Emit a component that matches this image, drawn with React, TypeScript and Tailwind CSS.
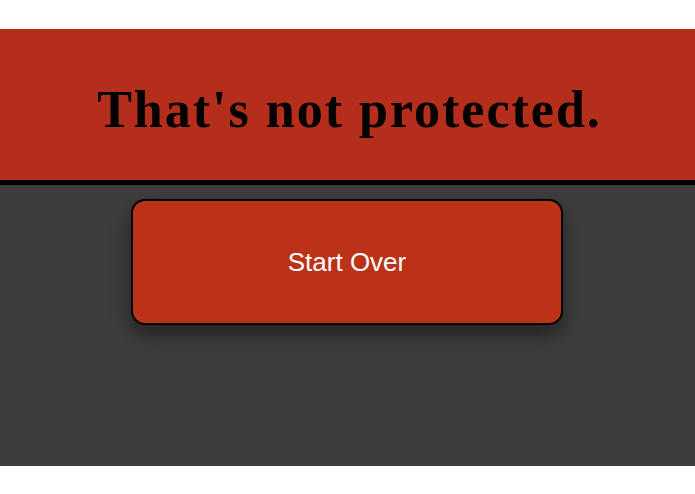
export default function App() {
  return (
    <div className="w-[695px] h-[494px] bg-white pt-[29px]">
      <div className="h-[156px] bg-[#b52d1b] border-b-[5px] border-black flex items-center justify-center">
        <h1
          className="text-[52px] font-bold text-black leading-none tracking-[2px] pt-[10px] pl-[4px]"
          style={{ fontFamily: '"Liberation Serif", "Times New Roman", serif' }}
        >
          That's not protected.
        </h1>
      </div>
      <div className="h-[281px] bg-[#3d3d3d] pt-[14px] flex justify-center">
        <button
          className="w-[432px] h-[126px] ml-[-1px] bg-[#bb3219] border-2 border-black rounded-[14px] shadow-[0_10px_20px_rgba(0,0,0,0.45)] text-white text-[26px] flex items-center justify-center"
          style={{ fontFamily: '"Liberation Sans", Arial, sans-serif' }}
        >
          Start Over
        </button>
      </div>
    </div>
  );
}
